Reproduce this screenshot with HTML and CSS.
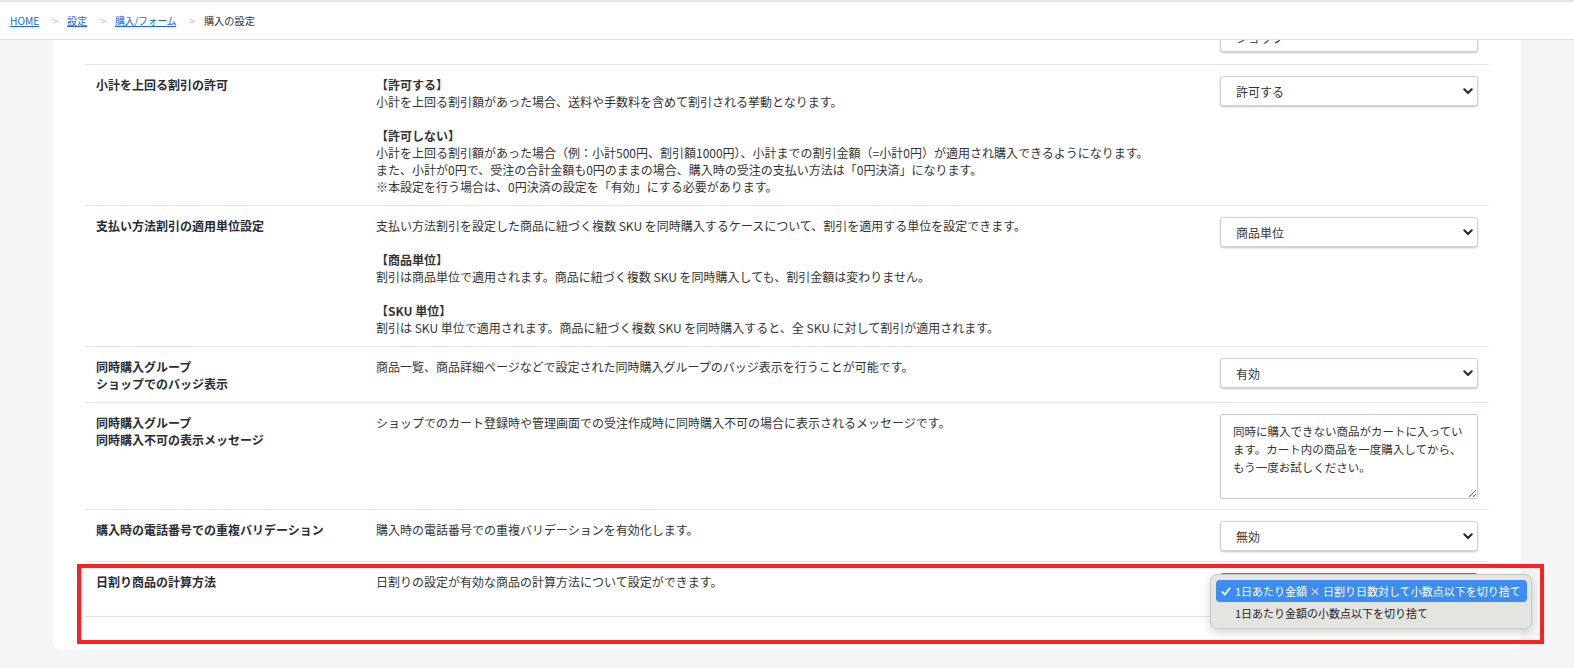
FILE: index.html
```html
<!DOCTYPE html>
<html lang="ja">
<head>
<meta charset="utf-8">
<title>購入の設定</title>
<link rel="stylesheet" href="styles.css">
</head>
<body>
<header class="topbar">
  <nav class="breadcrumb">
    <a href="#" class="crumb-link">HOME</a>
    <span class="crumb-sep">&gt;</span>
    <a href="#" class="crumb-link">設定</a>
    <span class="crumb-sep">&gt;</span>
    <a href="#" class="crumb-link crumb-tight">購入/フォーム</a>
    <span class="crumb-sep">&gt;</span>
    <span class="crumb-current">購入の設定</span>
  </nav>
</header>

<main class="main">
  <section class="card">
    <table class="settings">
      <colgroup>
        <col class="col-label">
        <col class="col-desc">
        <col class="col-control">
      </colgroup>
      <tbody>
        <tr class="row-partial">
          <td class="label"></td>
          <td class="desc"></td>
          <td>
            <div class="select-wrap">
              <select class="select"><option>ショップ</option></select>
              <svg class="chevron" viewBox="0 0 10 7" width="10" height="7"><path d="M1.3 1.3 L5 5 L8.7 1.3" fill="none" stroke="#2a2c33" stroke-width="2.1" stroke-linecap="round" stroke-linejoin="round"/></svg>
            </div>
          </td>
        </tr>

        <tr>
          <td class="label">小計を上回る割引の許可</td>
          <td class="desc">
            <div class="desc-block">
              <div class="head">【許可する】</div>
              <div>小計を上回る割引額があった場合、送料や手数料を含めて割引される挙動となります。</div>
            </div>
            <div class="desc-block">
              <div class="head">【許可しない】</div>
              <div>小計を上回る割引額があった場合（例：小計500円、割引額1000円）、小計までの割引金額（=小計0円）が適用され購入できるようになります。</div>
              <div>また、小計が0円で、受注の合計金額も0円のままの場合、購入時の受注の支払い方法は「0円決済」になります。</div>
              <div>※本設定を行う場合は、0円決済の設定を「有効」にする必要があります。</div>
            </div>
          </td>
          <td>
            <div class="select-wrap">
              <select class="select"><option>許可する</option><option>許可しない</option></select>
              <svg class="chevron" viewBox="0 0 10 7" width="10" height="7"><path d="M1.3 1.3 L5 5 L8.7 1.3" fill="none" stroke="#2a2c33" stroke-width="2.1" stroke-linecap="round" stroke-linejoin="round"/></svg>
            </div>
          </td>
        </tr>

        <tr>
          <td class="label">支払い方法割引の適用単位設定</td>
          <td class="desc">
            <div class="desc-block">
              <div>支払い方法割引を設定した商品に紐づく複数 SKU を同時購入するケースについて、割引を適用する単位を設定できます。</div>
            </div>
            <div class="desc-block">
              <div class="head">【商品単位】</div>
              <div>割引は商品単位で適用されます。商品に紐づく複数 SKU を同時購入しても、割引金額は変わりません。</div>
            </div>
            <div class="desc-block">
              <div class="head">【SKU 単位】</div>
              <div>割引は SKU 単位で適用されます。商品に紐づく複数 SKU を同時購入すると、全 SKU に対して割引が適用されます。</div>
            </div>
          </td>
          <td>
            <div class="select-wrap">
              <select class="select"><option>商品単位</option><option>SKU 単位</option></select>
              <svg class="chevron" viewBox="0 0 10 7" width="10" height="7"><path d="M1.3 1.3 L5 5 L8.7 1.3" fill="none" stroke="#2a2c33" stroke-width="2.1" stroke-linecap="round" stroke-linejoin="round"/></svg>
            </div>
          </td>
        </tr>

        <tr>
          <td class="label">同時購入グループ<br>ショップでのバッジ表示</td>
          <td class="desc">商品一覧、商品詳細ページなどで設定された同時購入グループのバッジ表示を行うことが可能です。</td>
          <td>
            <div class="select-wrap">
              <select class="select"><option>有効</option><option>無効</option></select>
              <svg class="chevron" viewBox="0 0 10 7" width="10" height="7"><path d="M1.3 1.3 L5 5 L8.7 1.3" fill="none" stroke="#2a2c33" stroke-width="2.1" stroke-linecap="round" stroke-linejoin="round"/></svg>
            </div>
          </td>
        </tr>

        <tr>
          <td class="label">同時購入グループ<br>同時購入不可の表示メッセージ</td>
          <td class="desc">ショップでのカート登録時や管理画面での受注作成時に同時購入不可の場合に表示されるメッセージです。</td>
          <td>
            <textarea class="textarea">同時に購入できない商品がカートに入っています。カート内の商品を一度購入してから、もう一度お試しください。</textarea>
          </td>
        </tr>

        <tr>
          <td class="label">購入時の電話番号での重複バリデーション</td>
          <td class="desc">購入時の電話番号での重複バリデーションを有効化します。</td>
          <td>
            <div class="select-wrap">
              <select class="select"><option>無効</option><option>有効</option></select>
              <svg class="chevron" viewBox="0 0 10 7" width="10" height="7"><path d="M1.3 1.3 L5 5 L8.7 1.3" fill="none" stroke="#2a2c33" stroke-width="2.1" stroke-linecap="round" stroke-linejoin="round"/></svg>
            </div>
          </td>
        </tr>

        <tr class="row-last">
          <td class="label">日割り商品の計算方法</td>
          <td class="desc">日割りの設定が有効な商品の計算方法について設定ができます。</td>
          <td>
            <div class="select-wrap">
              <select class="select select-focused"><option>1日あたり金額 × 日割り日数対して小数点以下を切り捨て</option><option>1日あたり金額の小数点以下を切り捨て</option></select>
              <div class="popup" role="listbox">
                <div class="popup-item is-selected" role="option">
                  <svg class="check" viewBox="0 0 10 9" width="10" height="9"><path d="M1.2 4.8 L3.8 7.6 L8.8 1.2" fill="none" stroke="#fff" stroke-width="1.7" stroke-linecap="round" stroke-linejoin="round"/></svg>
                  <span>1日あたり金額 × 日割り日数対して小数点以下を切り捨て</span>
                </div>
                <div class="popup-item" role="option"><span>1日あたり金額の小数点以下を切り捨て</span></div>
              </div>
            </div>
          </td>
        </tr>
      </tbody>
    </table>
    <div class="annotation"></div>
  </section>
</main>
</body>
</html>
```

FILE: styles.css
```css
* {
  box-sizing: border-box;
}

html,
body {
  margin: 0;
  padding: 0;
}

body {
  background: #f3f5f7;
  font-family: "Noto Sans CJK JP", "Noto Sans", sans-serif;
  font-size: 12px;
  line-height: 17px;
  color: #333;
  overflow: hidden;
}

/* Header / breadcrumb */
.topbar {
  position: fixed;
  top: 0;
  left: 0;
  right: 0;
  height: 40px;
  background: #fff;
  border-top: 2px solid #e2e3ec;
  border-bottom: 1px solid #dedfe8;
  display: flex;
  align-items: center;
  padding-left: 10px;
  z-index: 20;
}

.breadcrumb {
  display: flex;
  align-items: center;
  font-size: 10.2px;
  line-height: 14px;
}

.crumb-link {
  color: #1f68e0;
  text-decoration: underline;
}

.crumb-tight {
  letter-spacing: -0.5px;
}

.crumb-sep {
  color: #b3b5bd;
  margin: 0 9px 0 13px;
}

.crumb-current {
  color: #333;
}

/* Main card */
.main {
  padding: 0 53px;
}

.card {
  position: relative;
  background: #fff;
  border-radius: 0 0 8px 8px;
  padding: 11px 32px 33px;
}

.settings {
  width: 100%;
  border-collapse: collapse;
  table-layout: fixed;
  border-bottom: 1px solid #e2e2ea;
}

.col-label {
  width: 280px;
}

.col-control {
  width: 280px;
}

.settings td {
  padding: 11px 11px 10px;
  border-top: 1px solid #e2e2ea;
  vertical-align: top;
}

.settings .row-partial td {
  border-top: none;
  padding-bottom: 12px;
}

.settings .row-last td {
  padding-bottom: 13px;
}

.label {
  font-weight: 700;
  color: #2b2c33;
}

.desc {
  color: #333;
}

.desc-block + .desc-block {
  margin-top: 17px;
}

.head {
  font-weight: 700;
}

/* Select */
.select-wrap {
  position: relative;
  width: 258px;
}

.select {
  -webkit-appearance: none;
  appearance: none;
  display: block;
  width: 100%;
  height: 30px;
  margin: 0;
  border: 1px solid #d0d2da;
  border-radius: 3px;
  background: #fff;
  box-shadow: 0 1px 2px rgba(40, 44, 60, 0.28);
  font-family: inherit;
  font-size: 12px;
  color: #333;
  padding: 0 28px 0 15px;
}

.select-focused {
  border-color: #3f8ae0;
}

.chevron {
  position: absolute;
  right: 5px;
  top: 50%;
  margin-top: -3px;
  pointer-events: none;
}

/* Textarea */
.textarea {
  display: block;
  width: 258px;
  height: 85px;
  margin: 0;
  border: 1px solid #c6c9d3;
  border-radius: 2px;
  padding: 7px 12px;
  font-family: inherit;
  font-size: 11.5px;
  line-height: 18px;
  color: #333;
  resize: vertical;
}

/* Native-looking select popup */
.popup {
  position: absolute;
  left: -10px;
  top: 1px;
  width: 322px;
  background: #e4e4e1;
  border: 1px solid #c9c9c5;
  border-radius: 7px;
  box-shadow: 0 3px 10px rgba(0, 0, 0, 0.18);
  padding: 5px 4px 4px 5px;
  z-index: 5;
}

.popup-item {
  position: relative;
  display: flex;
  align-items: center;
  height: 22px;
  padding-left: 19px;
  border-radius: 4px;
  font-size: 11px;
  color: #242424;
  white-space: nowrap;
}

.popup-item.is-selected {
  background: #3c8cf2;
  color: #fff;
}

.check {
  position: absolute;
  left: 5px;
  top: 7px;
}

/* Red highlight annotation */
.annotation {
  position: absolute;
  left: 24px;
  right: -23px;
  bottom: 6px;
  height: 80px;
  border: 4px solid #fe2121;
  pointer-events: none;
  z-index: 4;
}
```
